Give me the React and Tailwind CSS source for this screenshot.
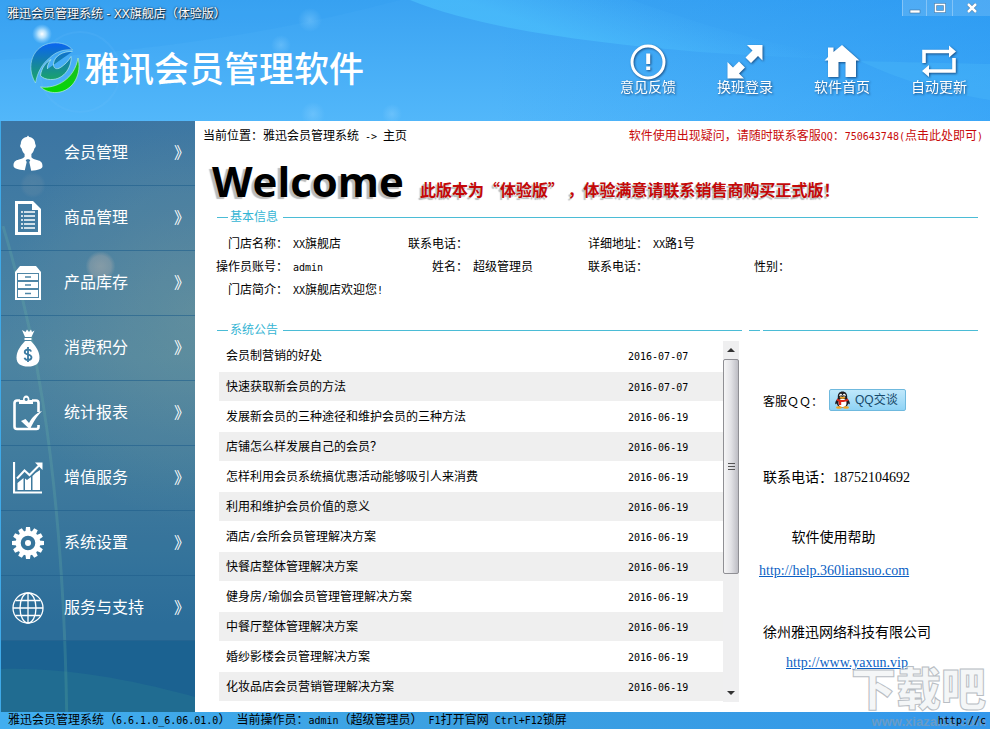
import React from "react";

const menuItems = [
  { label: "会员管理", icon: MemberIcon },
  { label: "商品管理", icon: GoodsIcon },
  { label: "产品库存", icon: StockIcon },
  { label: "消费积分", icon: MoneyBagIcon },
  { label: "统计报表", icon: ReportIcon },
  { label: "增值服务", icon: ChartIcon },
  { label: "系统设置", icon: GearIcon },
  { label: "服务与支持", icon: GlobeIcon },
];

const toolItems = [
  { label: "意见反馈", icon: FeedbackIcon },
  { label: "换班登录", icon: SwitchIcon },
  { label: "软件首页", icon: HomeIcon },
  { label: "自动更新", icon: UpdateIcon },
];

const notices = [
  { title: "会员制营销的好处", date: "2016-07-07" },
  { title: "快速获取新会员的方法", date: "2016-07-07" },
  { title: "发展新会员的三种途径和维护会员的三种方法", date: "2016-06-19" },
  { title: "店铺怎么样发展自己的会员？", date: "2016-06-19" },
  { title: "怎样利用会员系统搞优惠活动能够吸引人来消费", date: "2016-06-19" },
  { title: "利用和维护会员价值的意义", date: "2016-06-19" },
  { title: "酒店/会所会员管理解决方案", date: "2016-06-19" },
  { title: "快餐店整体管理解决方案", date: "2016-06-19" },
  { title: "健身房/瑜伽会员管理管理解决方案", date: "2016-06-19" },
  { title: "中餐厅整体管理解决方案", date: "2016-06-19" },
  { title: "婚纱影楼会员管理解决方案", date: "2016-06-19" },
  { title: "化妆品店会员营销管理解决方案", date: "2016-06-19" },
];

function MemberIcon() {
  return (
    <svg width="30" height="36" viewBox="0 0 30 36" fill="#fff">
      <path d="M15 .5l1.200 1.500c3.800.6 6 3.400 6 7 .7.900.8 2 .4 3-.3.700-.8 1-1.200 1.500-.6 2.500-1.600 4.300-3 5.400v3.300c1.400 1.800 3 2.200 5.600 2.800 4 .9 5.500 2.600 5.500 6.200 0 2.800-4.500 4-11.300 4.500L16.300 27l1-1.700-1.300-1h-2l-1.300 1 1 1.700-1.900 8.200C5 34.700.5 33.500.5 30.700c0-3.600 1.500-5.300 5.500-6.200 2.600-.6 4.200-1 5.600-2.800v-2.800c-1.400-1.100-2.400-2.900-3-5.400-.4-.5-.9-.8-1.200-1.500-.4-1-.3-2.100.4-3 0-3.600 2.200-6.400 6-7z" />
    </svg>
  );
}

function GoodsIcon() {
  return (
    <svg width="26" height="34" viewBox="0 0 26 34">
      <path fillRule="evenodd" fill="#fff" d="M0 0h18l8 8v26H0zM3 3v28h20V9h-6V3z" />
      <path d="M6 11h2M6 15h2M6 19h2M6 23h2M6 27h2M9 11h11M9 15h11M9 19h11M9 23h11M9 27h11" stroke="#fff" strokeWidth="1.400" />
    </svg>
  );
}

function StockIcon() {
  return (
    <svg width="26" height="34" viewBox="0 0 26 34">
      <path d="M5 0h16l5 6v28H0V6z" fill="#fff" />
      <g fill="none" stroke="#4f86a6" strokeWidth="1">
        <rect x="2.500" y="7.500" width="21" height="7" />
        <rect x="2.500" y="15.500" width="21" height="7" />
        <rect x="2.500" y="23.500" width="21" height="8" />
      </g>
      <path d="M10 11h6M10 19h6M10 27.500h6" stroke="#4f86a6" strokeWidth="1.600" />
    </svg>
  );
}

function MoneyBagIcon() {
  return (
    <svg width="24" height="38" viewBox="0 0 24 38">
      <path d="M6 1l3.500 2L11 .5 13 3l2-2.500 1 2.500 2.500-1.500L15.500 8H9z" fill="#fff" />
      <path d="M8.500 9h7v2h-7z" fill="#fff" />
      <path d="M9 12h6c4.500 5 8.500 10 8.500 16.500C23.500 35 19 37.500 12 37.500S.5 35 .5 28.500C.5 22 4.500 17 9 12z" fill="#fff" />
      <path d="M15.200 22.500c-.6-1.500-1.700-2-3.200-2-1.900 0-3.300.9-3.300 2.500 0 3.500 6.800 1.700 6.800 5.300 0 1.700-1.500 2.700-3.500 2.700-1.700 0-3-.7-3.500-2.300M12 18v15" fill="none" stroke="#3b7ba2" strokeWidth="1.800" />
    </svg>
  );
}

function ReportIcon() {
  return (
    <svg width="30" height="36" viewBox="0 0 30 36" fill="none">
      <path d="M7 5.500H4A2.500 2.500 0 0 0 1.500 8v23.500A2.500 2.500 0 0 0 4 34h19.500a2 2 0 0 0 2-2v-2M19 5.500h4A2.500 2.500 0 0 1 25.500 8v9" stroke="#fff" strokeWidth="2.600" />
      <path fillRule="evenodd" d="M6 9V5h4c0-3 1.200-4.500 3.200-4.500S16.500 2 16.500 5H20v4zM13.200 2.800a1.600 1.600 0 1 0 .01 0z" fill="#fff" />
      <path d="M8 26l4.500-2 3.500 4c3-5.500 7-10 13-12-5 5-8.500 10.500-12 18.500z" fill="#fff" />
    </svg>
  );
}

function ChartIcon() {
  return (
    <svg width="30" height="32" viewBox="0 0 30 32">
      <path d="M1 0v30.500h28" fill="none" stroke="#fff" strokeWidth="2.200" />
      <path d="M4.500 21l6-5v12h-6zM12 16.500l2 1.500 4-3v13h-6zM19.500 14l3-3 4.500-3v20h-7.500z" fill="#fff" />
      <path d="M4 16.500l7.500-8 5 4.500L26 3.500" fill="none" stroke="#fff" strokeWidth="2" />
      <path d="M22 .5h7.500V8z" fill="#fff" />
    </svg>
  );
}

function GearIcon() {
  const teeth = [0, 30, 60, 90, 120, 150, 180, 210, 240, 270, 300, 330];
  return (
    <svg width="32" height="32" viewBox="0 0 32 32">
      {teeth.map((a) => (
        <path key={a} d="M14 0h4l.6 5h-5.200z" fill="#fff" transform={`rotate(${a} 16 16)`} />
      ))}
      <circle cx="16" cy="16" r="9.800" fill="none" stroke="#fff" strokeWidth="5" />
      <circle cx="16" cy="16" r="3" fill="#fff" />
    </svg>
  );
}

function GlobeIcon() {
  return (
    <svg width="32" height="32" viewBox="0 0 32 32" fill="none" stroke="#fff" strokeWidth="1.300">
      <circle cx="16" cy="16" r="15" />
      <ellipse cx="16" cy="16" rx="8" ry="15" />
      <path d="M16 1v30M1 16h30M3.500 8.500h25M3.500 23.500h25" />
    </svg>
  );
}

function FeedbackIcon() {
  return (
    <svg width="36" height="36" viewBox="0 0 36 36">
      <circle cx="18" cy="18" r="16" fill="none" stroke="#fff" strokeWidth="3" />
      <path d="M16.200 9.500h4v10.500h-4zM16.200 22.500h4v3.500h-4z" fill="#fff" />
    </svg>
  );
}

function SwitchIcon() {
  return (
    <svg width="36" height="36" viewBox="0 0 36 36" fill="#fff">
      <path d="M20 1h15.500v15.500l-4.500-4.500-7 7-5.500-5.500 7-7z" />
      <path d="M.5 18l5.500 5.500 6-6 6 6-6 6 5 5H.5z" />
    </svg>
  );
}

function HomeIcon() {
  return (
    <svg width="36" height="36" viewBox="0 0 36 36" fill="#fff">
      <path d="M4 3.500h5.500V8L18 1l17.500 15.500H32V33H21.500V18h-7v15H4V16.500H.5L4 13z" />
    </svg>
  );
}

function UpdateIcon() {
  return (
    <svg width="36" height="36" viewBox="0 0 36 36">
      <path d="M3 19V7.500h26M33 14v13H7" fill="none" stroke="#fff" strokeWidth="3.600" />
      <path d="M28 1.500l7 6-7 6zM8 21l-7 6 7 6z" fill="#fff" />
    </svg>
  );
}

function Logo() {
  return (
    <svg width="50" height="52" viewBox="0 0 50 52">
      <defs>
        <linearGradient id="logoBlue" gradientUnits="userSpaceOnUse" x1="0" y1="2" x2="0" y2="40">
          <stop offset="0" stopColor="#0a66ee" />
          <stop offset="0.500" stopColor="#1583a6" />
          <stop offset="1" stopColor="#1aa862" />
        </linearGradient>
        <linearGradient id="logoGreen" x1="0" y1="0" x2="0" y2="1">
          <stop offset="0" stopColor="#20b62c" />
          <stop offset="1" stopColor="#05d905" />
        </linearGradient>
      </defs>
      <path d="M5.500 41C-5 24 3 3 22 1c9-1 17 2 20.500 7-9-1-17 2-23 8C12 22 7.500 30 5.500 41z" fill="url(#logoBlue)" stroke="#a9e6ee" strokeWidth="0.600" />
      <path d="M42.500 9.500c-9-.5-18 4-19 12-.5 5 3 6.500 7 4 4-2.500 8-6.500 10.500-11 1 9-6 23.500-20.500 23-4 0-8-1.500-10-4 1-7.500 5-13 10.500-16-3 4-4 7-3.500 9.500" fill="url(#logoBlue)" stroke="#b6ecee" strokeWidth="0.700" />
      <path d="M48 16c4 15-4 33-21 34.500-6 .5-12-1.500-16.500-5.500C26.500 47 44.500 37 48 16z" fill="url(#logoGreen)" stroke="#b5f0cf" strokeWidth="0.700" />
    </svg>
  );
}

function PenguinIcon() {
  return (
    <svg width="17" height="18" viewBox="0 0 17 18">
      <path d="M8.500.5c3 0 4.700 2.200 4.700 5v1.700c1.300 1.400 2.600 3.400 2.600 5.200 0 1-.8 1.100-1.600-.2-.3 1.900-1.800 4.300-5.700 4.300s-5.400-2.400-5.700-4.300c-.8 1.300-1.600 1.200-1.600.2 0-1.800 1.300-3.800 2.600-5.200V5.500c0-2.800 1.700-5 4.700-5z" fill="#1c1c22" />
      <ellipse cx="8.500" cy="12" rx="4" ry="4.200" fill="#fff" />
      <circle cx="6.800" cy="4.200" r="1.400" fill="#fff" />
      <circle cx="10.200" cy="4.200" r="1.400" fill="#fff" />
      <circle cx="7.100" cy="4.300" r="0.600" fill="#000" />
      <circle cx="9.900" cy="4.300" r="0.600" fill="#000" />
      <ellipse cx="8.500" cy="6.800" rx="3" ry="1" fill="#f5a623" />
      <path d="M3.200 7.600c3.300 2 7.300 2 10.600 0l.6 2c-1.800 1-3.500 1.400-5 1.500H7.200v3H4.800V10.500l-2.200-.8z" fill="#dd2418" />
      <ellipse cx="5" cy="16.500" rx="3" ry="1.200" fill="#f5a623" />
      <ellipse cx="12" cy="16.500" rx="3" ry="1.200" fill="#f5a623" />
    </svg>
  );
}

// Half-width characters take half of a 12px CJK cell
function Mixed({ text }) {
  return text.split(/([\x20-\x7e]+)/).map((part, i) =>
    i % 2 === 1 ? (
      <span key={i} className="whitespace-pre font-['DejaVu_Sans_Mono',monospace] text-[10px]">
        {part}
      </span>
    ) : (
      part
    )
  );
}

function HeaderBackdrop() {
  return (
    <svg className="absolute inset-0 h-full w-full" viewBox="0 0 990 121" preserveAspectRatio="none" aria-hidden="true">
      <defs>
        <linearGradient id="shade" x1="0" y1="0" x2="1" y2="0">
          <stop offset="0.500" stopColor="#1f93f4" stopOpacity="0" />
          <stop offset="1" stopColor="#1f93f4" stopOpacity="0.450" />
        </linearGradient>
        <linearGradient id="beam" gradientUnits="userSpaceOnUse" x1="660" y1="0" x2="640" y2="60">
          <stop offset="0" stopColor="#4dbafc" stopOpacity="0" />
          <stop offset="1" stopColor="#4dc3fd" stopOpacity="0.600" />
        </linearGradient>
        <radialGradient id="spark">
          <stop offset="0" stopColor="#fff" />
          <stop offset="0.400" stopColor="#d4f0ff" stopOpacity="0.800" />
          <stop offset="1" stopColor="#9bd8ff" stopOpacity="0" />
        </radialGradient>
        <radialGradient id="glow">
          <stop offset="0" stopColor="#8ed2ff" stopOpacity="0.400" />
          <stop offset="1" stopColor="#8ed2ff" stopOpacity="0" />
        </radialGradient>
      </defs>
      <rect width="990" height="121" fill="url(#shade)" />
      <path d="M0 60C150 52 280 32 400 0H0z" fill="#2f9af0" opacity="0.200" />
      <path d="M410 0C480 28 580 42 700 52C800 59 900 62 990 64L870 61C780 48 710 28 632 0z" fill="url(#beam)" />
      <path d="M860 61C900 62 950 63 990 64V100C940 92 900 80 860 61z" fill="#55c3fb" opacity="0.250" />
      <circle cx="42" cy="34" r="10" fill="url(#spark)" />
      <circle cx="310" cy="20" r="12" fill="url(#glow)" />
      <circle cx="281" cy="45" r="10" fill="url(#glow)" />
      <circle cx="313" cy="114" r="12" fill="url(#glow)" />
      <circle cx="392" cy="114" r="10" fill="url(#glow)" />
      <circle cx="80" cy="72" r="40" fill="none" stroke="#7cc8fc" strokeWidth="2" opacity="0.120" />
    </svg>
  );
}

function SidebarBackdrop() {
  return (
    <svg className="absolute inset-0 h-full w-full" viewBox="0 0 195 590" preserveAspectRatio="none" aria-hidden="true">
      <defs>
        <radialGradient id="dust">
          <stop offset="0" stopColor="#a9a7a5" stopOpacity="0.550" />
          <stop offset="0.700" stopColor="#a9a7a5" stopOpacity="0.400" />
          <stop offset="1" stopColor="#a9a7a5" stopOpacity="0" />
        </radialGradient>
        <radialGradient id="warm">
          <stop offset="0" stopColor="#7f9a90" stopOpacity="0.350" />
          <stop offset="1" stopColor="#7f9a90" stopOpacity="0" />
        </radialGradient>
      </defs>
      <ellipse cx="195" cy="190" rx="190" ry="210" fill="url(#warm)" />
      <path d="M0 560V547C70 545 140 560 195 575V590H0z" fill="#3a9a94" opacity="0.180" />
      <path d="M2 105C28 190 62 330 66 590" fill="none" stroke="#5fb0a0" strokeWidth="3" opacity="0.250" />
      <circle cx="100" cy="145" r="15" fill="url(#dust)" />
      <circle cx="32" cy="64" r="13" fill="url(#dust)" opacity="0.250" />
    </svg>
  );
}

function Header() {
  return (
    <header className="relative flex h-[121px] shrink-0 items-start justify-between bg-linear-to-b from-[#3aa3f2] to-[#52b7fa] text-white">
      <HeaderBackdrop />
      <div className="relative">
        <p className="pt-1 pl-[7px] text-[12px] leading-5 [text-shadow:1px_1px_1px_#123,0_0_2px_#123]">
          雅迅会员管理系统 - XX旗舰店（体验版）
        </p>
        <div className="mt-[18px] flex items-center gap-1 pl-[30px]">
          <Logo />
          <h1 className="pt-1 text-[35px] leading-[48px] font-medium whitespace-nowrap">雅讯会员管理软件</h1>
        </div>
      </div>
      <div className="relative flex flex-col items-end">
        <div className="flex h-4 items-stretch divide-x divide-white/30 border-l border-white/30 bg-white/15">
          <button type="button" aria-label="最小化" className="flex w-6 justify-center">
            <svg width="12" height="15" viewBox="0 0 12 15">
              <rect x="1" y="10" width="10" height="3" fill="#fff" stroke="#3d6f9c" strokeWidth="0.600" />
            </svg>
          </button>
          <button type="button" aria-label="最大化" className="flex w-[26px] justify-center">
            <svg width="12" height="15" viewBox="0 0 12 15">
              <rect x="1.500" y="4.500" width="9" height="7" fill="none" stroke="#3d6f9c" strokeWidth="2.600" />
              <rect x="1.500" y="4.500" width="9" height="7" fill="none" stroke="#fff" strokeWidth="1.600" />
            </svg>
          </button>
          <button type="button" aria-label="关闭" className="flex w-[37px] justify-center">
            <svg width="12" height="15" viewBox="0 0 12 15">
              <path d="M2 4l8 8M10 4l-8 8" stroke="#3d6f9c" strokeWidth="3.600" />
              <path d="M2 4l8 8M10 4l-8 8" stroke="#fff" strokeWidth="2.600" />
            </svg>
          </button>
        </div>
        <nav className="mt-[28px] flex gap-[13px] pr-[9px]">
          {toolItems.map(({ label, icon: Icon }) => (
            <button
              key={label}
              type="button"
              className="flex w-[84px] flex-col items-center text-[14px] leading-[14px] drop-shadow-[1px_1px_1px_#1a4f85]"
            >
              <Icon />
              {label}
            </button>
          ))}
        </nav>
      </div>
    </header>
  );
}

function Sidebar() {
  return (
    <aside className="relative w-[195px] shrink-0 border-l border-[#3fa9e8] bg-linear-to-b from-[#2c6b9c] via-[#3f7b9a] via-40% to-[#1b6291] to-85%">
      <SidebarBackdrop />
      <nav className="relative bg-white/7">
        {menuItems.map(({ label, icon: Icon }) => (
          <a
            key={label}
            href="#"
            className="flex h-[65px] items-center border-b border-[#1f5f8c]/60 pr-[5px] text-[16px] text-white"
          >
            <span className="flex w-[54px] justify-center">
              <Icon />
            </span>
            <span className="flex-1 pl-[9px]">{label}</span>
            <span className="w-4">》</span>
          </a>
        ))}
      </nav>
    </aside>
  );
}

function SectionTitle({ children }) {
  return (
    <h2 className="flex h-4 items-center text-[12px] leading-4 text-[#35b5d4]">
      <span className="h-px w-[11px] bg-[#4bbcd6]" />
      {children && <span className="pr-[5px] pl-[2px]">{children}</span>}
      <span className={children ? "h-px flex-1 bg-[#4bbcd6]" : "ml-[3px] h-px flex-1 bg-[#4bbcd6]"} />
    </h2>
  );
}

function Field({ label, value = "", labelClass = "" }) {
  return (
    <div className="flex gap-[5px] whitespace-nowrap">
      <dt className={`flex shrink-0 justify-end ${labelClass}`}>{label + "："}</dt>
      <dd>
        <Mixed text={value} />
      </dd>
    </div>
  );
}

function BasicInfo() {
  return (
    <dl className="grid grid-cols-[191px_180px_166px_1fr] gap-y-[2px] pt-[9px] text-[12px] leading-5">
      <Field label="门店名称" value="XX旗舰店" labelClass="w-[71px]" />
      <Field label="联系电话" labelClass="w-[60px]" />
      <Field label="详细地址" value="XX路1号" labelClass="w-[60px]" />
      <span />
      <Field label="操作员账号" value="admin" labelClass="w-[71px]" />
      <Field label="姓名" value="超级管理员" labelClass="w-[60px]" />
      <Field label="联系电话" labelClass="w-[60px]" />
      <Field label="性别" />
      <Field label="门店简介" value="XX旗舰店欢迎您!" labelClass="w-[71px]" />
    </dl>
  );
}

function Scrollbar() {
  return (
    <div className="flex w-4 flex-col bg-[#efeff0]">
      <button type="button" aria-label="向上滚动" className="flex h-[18px] items-center justify-center">
        <svg width="8" height="4" viewBox="0 0 8 4">
          <path d="M4 0l4 4H0z" fill="#333" />
        </svg>
      </button>
      <div className="flex h-[215px] flex-col items-center justify-center gap-[2px] rounded-[2px] border border-[#8f8f94] bg-linear-to-r from-[#f5f5f6] via-[#e2e2e6] to-[#bdbdc4]">
        <span className="h-px w-[7px] bg-[#555]" />
        <span className="h-px w-[7px] bg-[#555]" />
        <span className="h-px w-[7px] bg-[#555]" />
      </div>
      <div className="flex-1" />
      <button type="button" aria-label="向下滚动" className="flex h-[18px] items-center justify-center">
        <svg width="8" height="4" viewBox="0 0 8 4">
          <path d="M0 0h8L4 4z" fill="#333" />
        </svg>
      </button>
    </div>
  );
}

function Notices() {
  return (
    <section className="min-w-0 flex-1">
      <SectionTitle>系统公告</SectionTitle>
      <div className="mt-[3px] mr-[3px] ml-[2px] flex">
        <table className="flex-1 text-[12px]">
          <tbody>
            {notices.map(({ title, date }) => (
              <tr key={title} className="h-[30px] border-b border-white even:bg-[#efefef]">
                <td className="pt-px pl-[7px]">
                  <Mixed text={title} />
                </td>
                <td className="w-[95px] pt-px">
                  <Mixed text={date} />
                </td>
              </tr>
            ))}
          </tbody>
        </table>
        <Scrollbar />
      </div>
    </section>
  );
}

function Contact() {
  return (
    <section className="w-[229px] shrink-0">
      <SectionTitle />
      <div className="flex items-center pt-[51px] pl-[14px] text-[12px]">
        <span className="w-[66px] pt-1">客服ＱＱ：</span>
        <button
          type="button"
          className="flex h-[22px] w-[77px] items-center gap-1 rounded-[2px] border border-[#6fb9de] bg-linear-to-b from-[#bfe8fb] to-[#8fd3f5] pl-1 text-[#174a6b]"
        >
          <PenguinIcon />
          <span className="whitespace-nowrap">QQ交谈</span>
        </button>
      </div>
      <div className="pl-[14px] font-['Liberation_Serif','Noto_Sans_CJK_SC',serif] text-[14px] leading-5">
        <p className="pt-[57px]">联系电话：18752104692</p>
        <div className="-ml-1 w-[149px] pt-10 text-center">
          <p>软件使用帮助</p>
          <p className="pt-[13px]">
            <a href="#" className="text-[#0b5fc4] underline">http://help.360liansuo.com</a>
          </p>
        </div>
        <div className="w-[168px] pt-[42px] text-center">
          <p>徐州雅迅网络科技有限公司</p>
          <p className="pt-[10px]">
            <a href="#" className="text-[#0b5fc4] underline">http://www.yaxun.vip</a>
          </p>
        </div>
      </div>
    </section>
  );
}

function Main() {
  return (
    <main className="min-w-0 flex-1 bg-white pr-[12px] pl-[22px] text-black">
      <div className="-mr-[5px] -ml-[14px] flex justify-between pt-[5px] text-[12px] leading-5">
        <p>
          <Mixed text="当前位置：雅迅会员管理系统 -> 主页" />
        </p>
        <a href="#" className="text-[#c80a0a]">
          <Mixed text="软件使用出现疑问，请随时联系客服QQ：750643748(点击此处即可)" />
        </a>
      </div>
      <div className="-ml-[5px] flex h-[62px] items-end gap-4 whitespace-nowrap">
        <p className="font-['Open_Sans',sans-serif] text-[42px] leading-[56px] font-bold [text-shadow:-3px_2px_1px_#bbb]">
          Welcome
        </p>
        <p className="pb-2 font-['Noto_Sans_CJK_SC',sans-serif] text-[16px] leading-6 font-bold text-[#c40808] [text-shadow:-2px_2px_1px_#bbb]">
          此版本为“体验版” ，体验满意请联系销售商购买正式版！
        </p>
      </div>
      <section className="h-[113px]">
        <SectionTitle>基本信息</SectionTitle>
        <BasicInfo />
      </section>
      <div className="flex gap-[7px]">
        <Notices />
        <Contact />
      </div>
    </main>
  );
}

function Footer() {
  return (
    <footer className="flex h-[17px] shrink-0 items-center justify-between bg-linear-to-r from-[#41aef0] via-[#3b9fe0] to-[#3398ec] pr-1 pl-2 text-[12px] leading-4 whitespace-nowrap text-black">
      <p>
        <Mixed text="雅迅会员管理系统（6.6.1.0_6.06.01.0） 当前操作员：admin（超级管理员） F1打开官网 Ctrl+F12锁屏" />
      </p>
      <p className="relative z-10">
        <Mixed text="http://c" />
      </p>
    </footer>
  );
}

function Watermark() {
  return (
    <div className="pointer-events-none absolute right-1 bottom-0 flex flex-col items-end">
      <span className="text-[45px] leading-[46px] font-black text-[#eef0f2]/60 [-webkit-text-stroke:1px_#b9bec4]">下载吧</span>
      <span className="font-['Liberation_Sans',sans-serif] text-[13px] leading-[15px] font-bold text-[#8d9eae]/60">www.xiazaiba.com</span>
    </div>
  );
}

export default function App() {
  return (
    <div className="relative flex min-h-screen flex-col overflow-hidden font-['Liberation_Sans','Noto_Sans_CJK_SC',sans-serif]">
      <Header />
      <div className="flex flex-1">
        <Sidebar />
        <Main />
      </div>
      <Footer />
      <Watermark />
    </div>
  );
}
